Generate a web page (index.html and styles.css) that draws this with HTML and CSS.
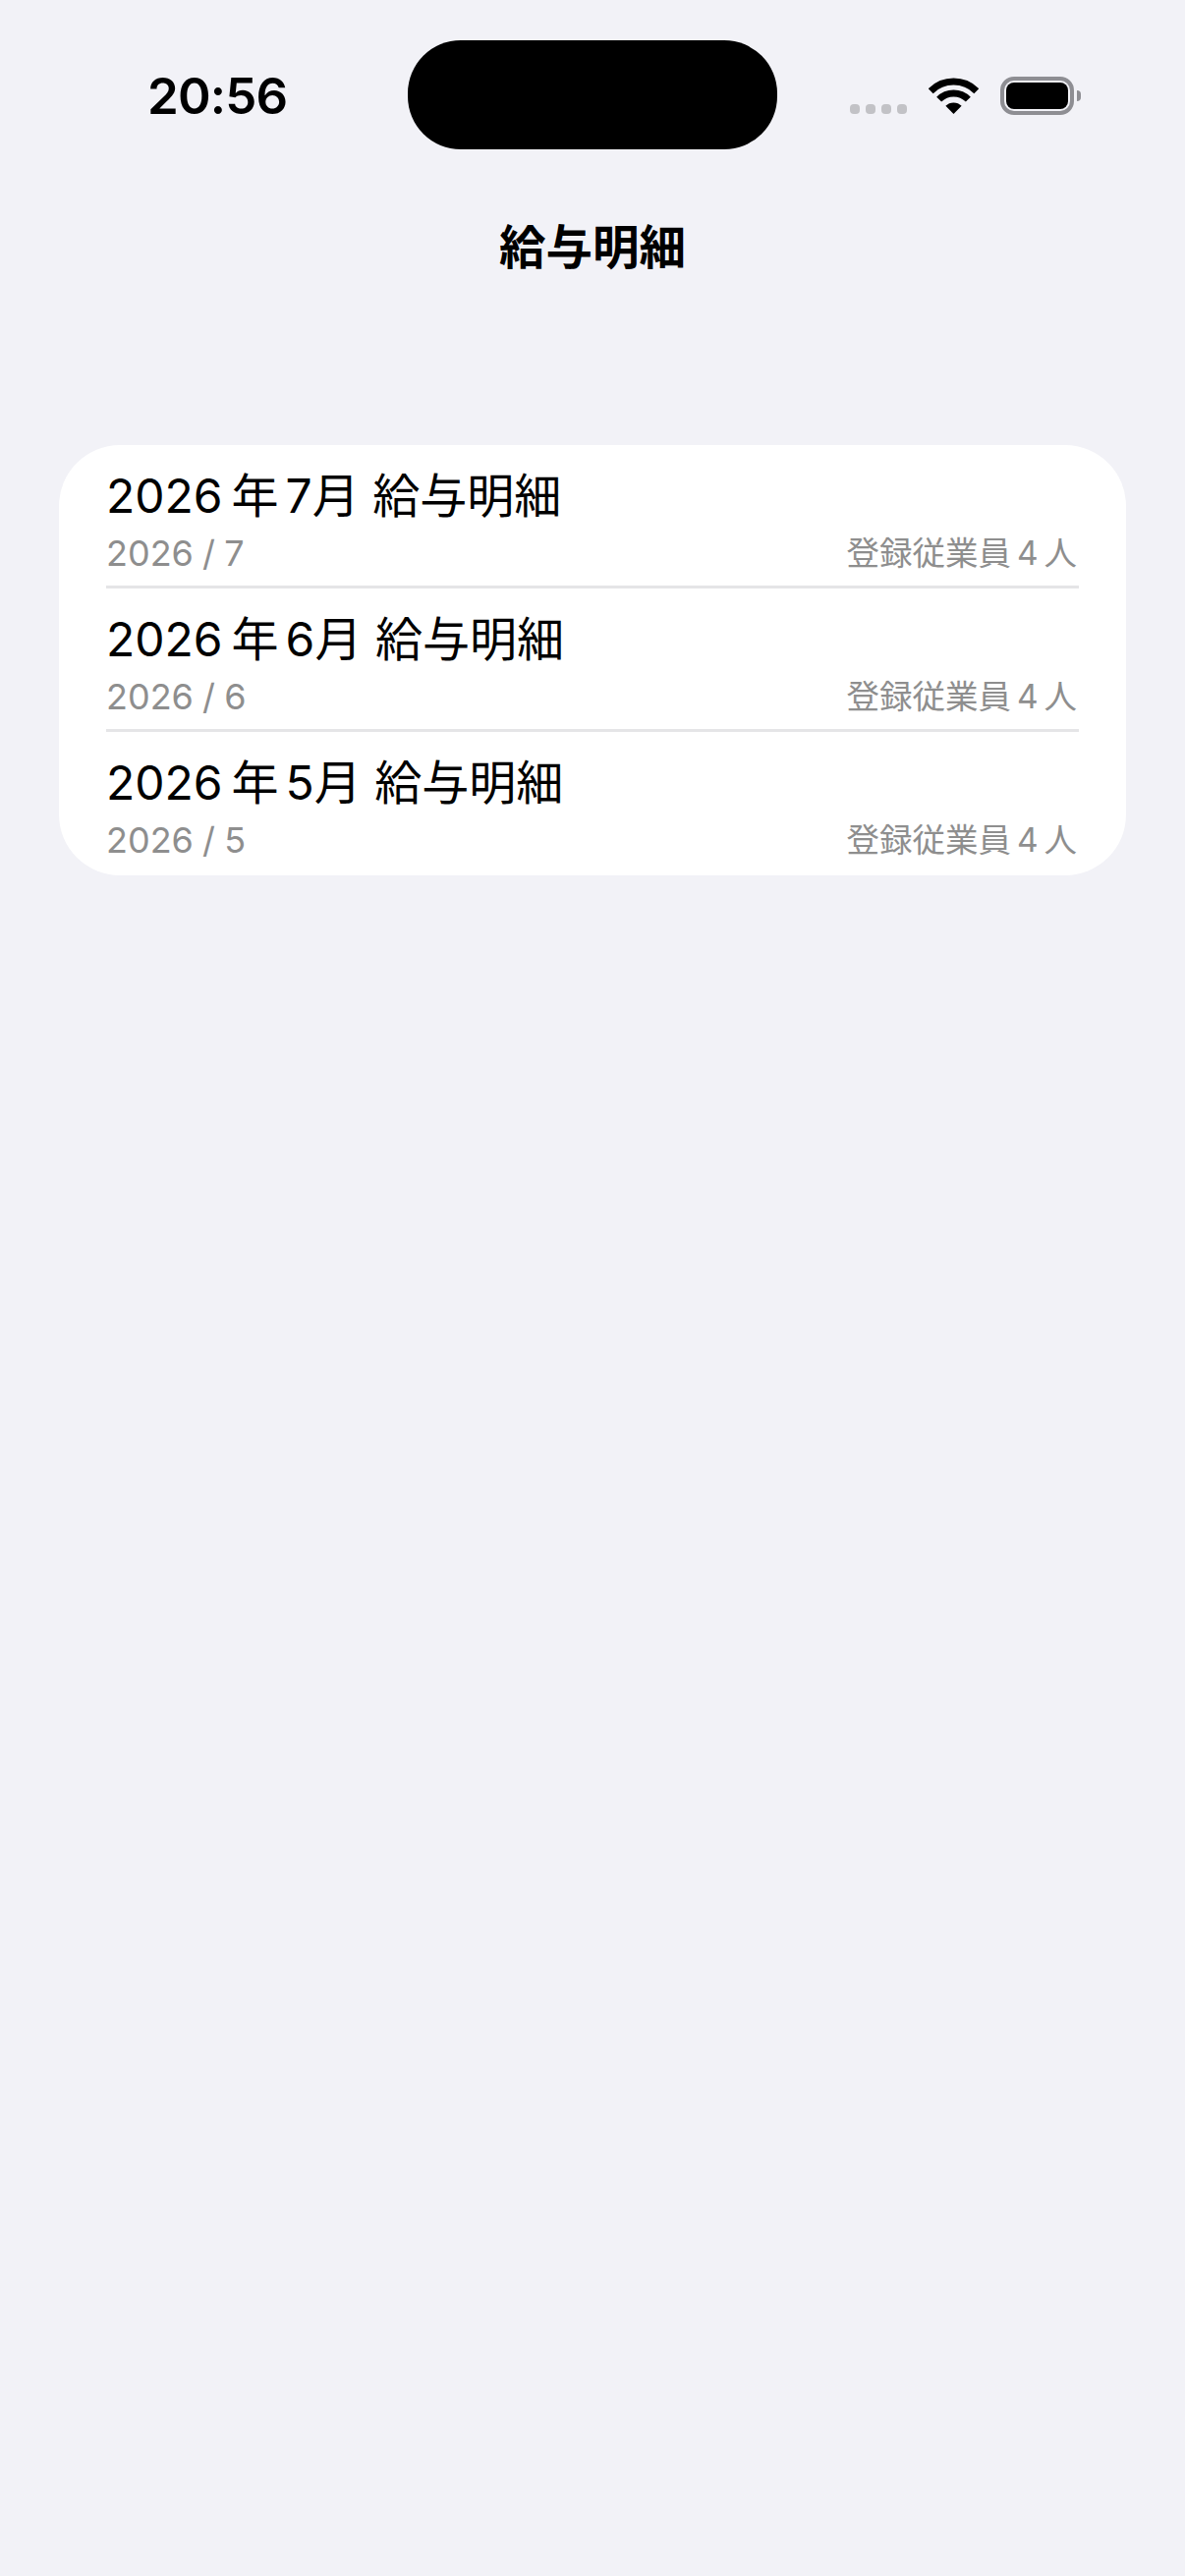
FILE: index.html
```html
<!DOCTYPE html>
<html lang="ja">
<head>
    <meta charset="UTF-8">
    <meta name="viewport" content="width=device-width, initial-scale=1.0">
    <title>給与明細</title>
    <link rel="stylesheet" href="styles.css">
</head>
<body>
    <div class="status-bar">
        <div class="status-left">
            <span class="time">20:56</span>
        </div>
        <div class="island"></div>
        <div class="status-right">
            <div class="signal">
                <span class="dot"></span>
                <span class="dot"></span>
                <span class="dot"></span>
                <span class="dot"></span>
            </div>
            <svg class="wifi" width="51" height="37" viewBox="0 0 51 37">
                <path d="M2.2 13.7A33 33 0 0 1 48.8 13.7" fill="none" stroke="#000" stroke-width="7"/>
                <path d="M10.65 22.15A21 21 0 0 1 40.35 22.15" fill="none" stroke="#000" stroke-width="7"/>
                <path d="M25.5 37L17.37 28.87A11.5 11.5 0 0 1 33.63 28.87Z" fill="#000"/>
            </svg>
            <div class="battery">
                <div class="battery-body"><div class="battery-fill"></div></div>
                <div class="battery-cap"></div>
            </div>
        </div>
    </div>

    <h1 class="nav-title">給与明細</h1>

    <div class="card">
        <div class="row">
            <div class="row-title">2026<span class="nen">年</span>7月 給与明細</div>
            <div class="row-sub">
                <span>2026 / 7</span>
                <span class="count">登録従業員 4 人</span>
            </div>
        </div>
        <div class="row">
            <div class="row-title">2026<span class="nen">年</span>6月 給与明細</div>
            <div class="row-sub">
                <span>2026 / 6</span>
                <span class="count">登録従業員 4 人</span>
            </div>
        </div>
        <div class="row last">
            <div class="row-title">2026<span class="nen">年</span>5月 給与明細</div>
            <div class="row-sub">
                <span>2026 / 5</span>
                <span class="count">登録従業員 4 人</span>
            </div>
        </div>
    </div>
</body>
</html>
```

FILE: styles.css
```css
* {
    box-sizing: border-box;
}
body {
    margin: 0;
    height: 2622px;
    background: #f2f2f7;
    font-family: Inter, "Noto Sans CJK JP", sans-serif;
    color: #000;
}
.status-bar {
    display: flex;
    padding-top: 41px;
    height: 152px;
}
.status-left {
    width: 415px;
    padding-left: 150px;
    padding-top: 30px;
}
.time {
    display: block;
    font-size: 51px;
    line-height: 54px;
    font-weight: 600;
    letter-spacing: -0.8px;
}
.island {
    width: 376px;
    height: 111px;
    background: #000;
    border-radius: 54px;
}
.status-right {
    display: flex;
    align-items: flex-start;
    padding-top: 37px;
    padding-left: 74px;
}
.signal {
    display: flex;
    gap: 6px;
    margin-top: 28px;
}
.dot {
    width: 10px;
    height: 10px;
    background: #c2c2c6;
    border-radius: 4px;
}
.wifi {
    margin-left: 22px;
    margin-top: 1px;
}
.battery {
    display: flex;
    align-items: center;
    margin-left: 22px;
}
.battery-body {
    width: 75px;
    height: 39px;
    padding: 2px;
    border: 4px solid #8e8e93;
    border-radius: 14px;
}
.battery-fill {
    height: 100%;
    background: #000;
    border-radius: 8px;
}
.battery-cap {
    width: 4px;
    height: 11px;
    margin-left: 3px;
    background: #8e8e93;
    border-radius: 0 4px 4px 0;
}
.nav-title {
    margin: 0;
    padding-top: 68px;
    font-size: 47.5px;
    line-height: 64px;
    font-weight: 700;
    text-align: center;
}
.card {
    margin: 169px 60px 0;
    background: #fff;
    border-radius: 62px;
}
.row {
    height: 146px;
    margin: 0 48px;
    padding-top: 20px;
    border-bottom: 3px solid #e5e5e7;
}
.row.last {
    border-bottom-color: transparent;
}
.row-title {
    font-size: 48px;
    line-height: 64px;
}
.nen {
    margin: 0 7px 0 9px;
}
.row-sub {
    display: flex;
    justify-content: space-between;
    align-items: center;
    margin-top: 4px;
    padding-right: 2px;
    font-size: 36px;
    line-height: 44px;
    word-spacing: -1px;
    color: #8e8e8e;
}
.count {
    font-size: 33.5px;
    word-spacing: -3.5px;
}
```
